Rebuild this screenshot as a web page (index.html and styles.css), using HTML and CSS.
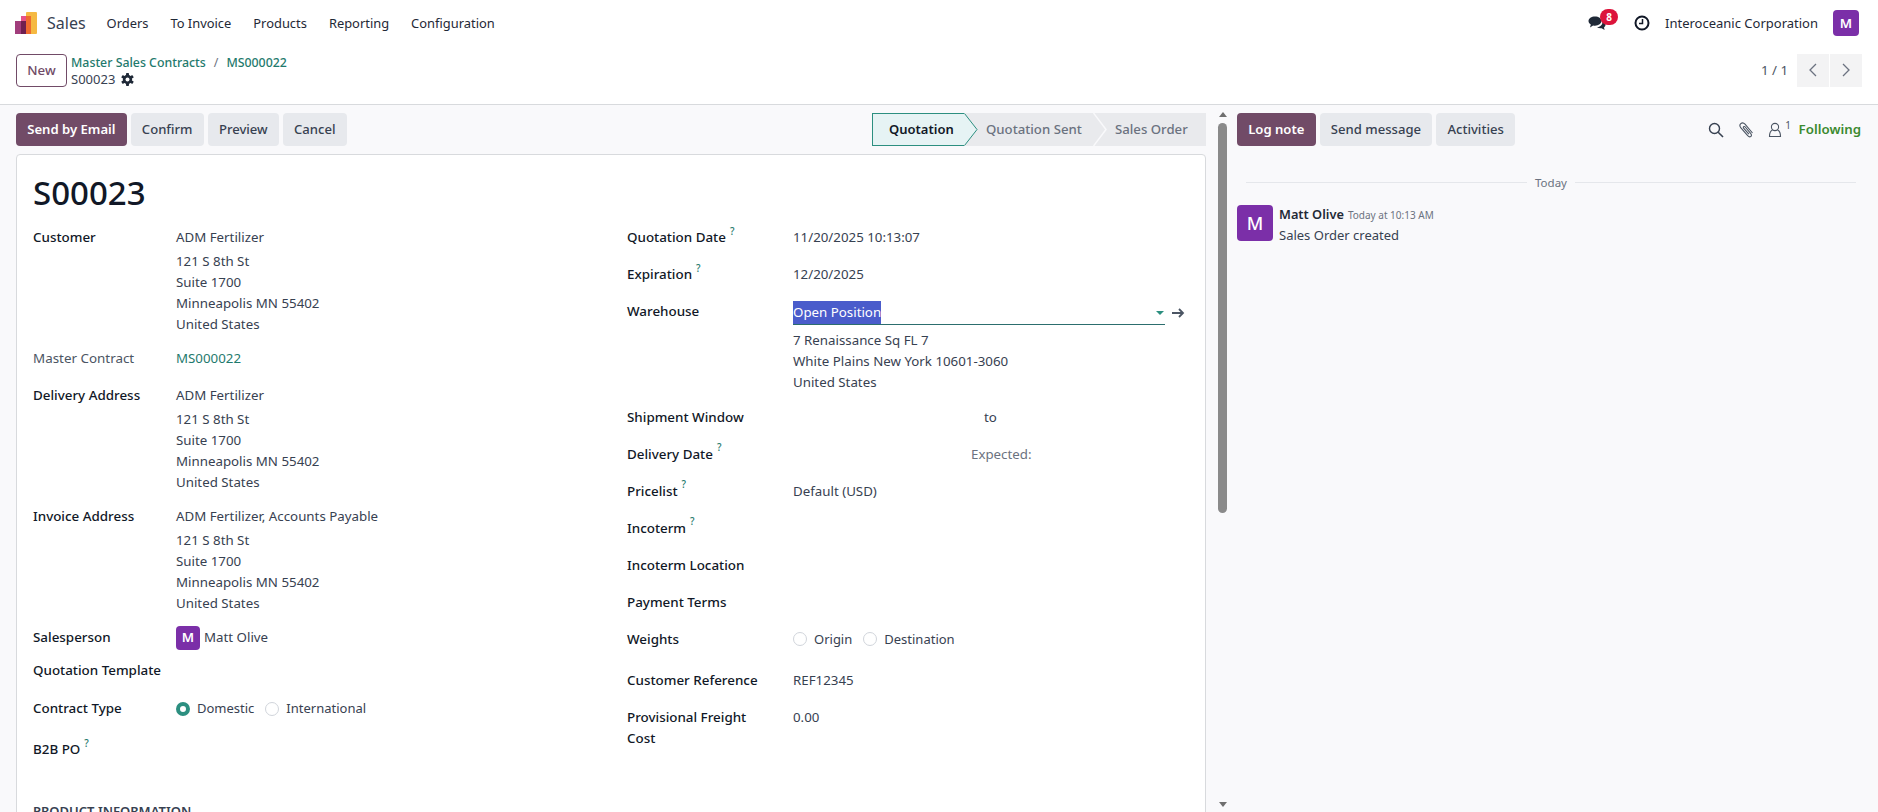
FILE: index.html
```html
<!DOCTYPE html>
<html lang="en">
<head>
<meta charset="utf-8">
<title>S00023 - Sales</title>
<link rel="stylesheet" href="styles.css">
</head>
<body>
<header class="navbar">
  <svg class="logo" width="23" height="23" viewBox="0 0 23 23"><rect x="11" y="0" width="11" height="22" rx="1" fill="#f5b942"/><rect x="6" y="4" width="10" height="18" fill="#ee6a2f"/><rect x="6" y="4" width="5" height="5" fill="#e6518a"/><rect x="0" y="9" width="11" height="13" fill="#a13d7c"/><rect x="6" y="9" width="5" height="13" fill="#6f1f50"/></svg>
  <span class="app-name">Sales</span>
  <nav class="menu"><a>Orders</a><a>To Invoice</a><a>Products</a><a>Reporting</a><a>Configuration</a></nav>
  <div class="systray">
    <span class="chat">
      <svg width="18" height="16" viewBox="0 0 18 16"><path d="M7 1.500c3.600 0 6.500 2 6.500 4.600s-2.900 4.600-6.500 4.600c-.7 0-1.300-.1-1.900-.2L2 12.500l.8-2.900C1.400 8.700.5 7.500.5 6.100.5 3.500 3.400 1.500 7 1.500z" fill="#1f2937"/><path d="M14.500 6.500c1.800.7 3 1.900 3 3.300 0 1-.6 1.900-1.500 2.600l.6 2.600-3-1.700c-2 .2-3.600-.2-4.800-1 3.400-.1 5.900-2.600 5.700-5.800z" fill="#1f2937"/></svg>
      <b class="badge">8</b>
    </span>
    <svg class="clock" width="16" height="16" viewBox="0 0 16 16"><circle cx="8" cy="8" r="6.500" fill="none" stroke="#111827" stroke-width="2"/><path d="M8.500 4v4.500H5" fill="none" stroke="#111827" stroke-width="1.500"/></svg>
    <span class="company">Interoceanic Corporation</span>
    <span class="avatar">M</span>
  </div>
</header>

<section class="control">
  <button class="btn-new">New</button>
  <div class="crumbs">
    <div class="crumb-top"><a>Master Sales Contracts</a><i>/</i><a>MS000022</a></div>
    <div class="crumb-current">S00023
      <svg width="13" height="13" viewBox="0 0 16 16"><g fill="#1f2937"><rect x="6.200" y="0" width="3.600" height="16" rx=".8"/><rect x="6.200" y="0" width="3.600" height="16" rx=".8" transform="rotate(60 8 8)"/><rect x="6.200" y="0" width="3.600" height="16" rx=".8" transform="rotate(120 8 8)"/><circle cx="8" cy="8" r="5.700"/></g><circle cx="8" cy="8" r="2.400" fill="#fff"/></svg>
    </div>
  </div>
  <div class="pager">
    <span class="pager-text">1 / 1</span>
    <span class="pager-btn"><svg width="14" height="16" viewBox="0 0 14 16"><path d="M10 2 4 8l6 6" fill="none" stroke="#6b7280" stroke-width="1.300"/></svg></span>
    <span class="pager-btn"><svg width="14" height="16" viewBox="0 0 14 16"><path d="m4 2 6 6-6 6" fill="none" stroke="#6b7280" stroke-width="1.300"/></svg></span>
  </div>
</section>

<main class="content">
  <div class="form-pane">
    <div class="statusbar">
      <div class="actions">
        <button class="btn primary">Send by Email</button>
        <button class="btn">Confirm</button>
        <button class="btn">Preview</button>
        <button class="btn">Cancel</button>
      </div>
      <div class="stages">
        <span class="stage current">Quotation<svg class="chev" width="14" height="33" viewBox="0 0 14 33"><path d="M0 .5h.5L13 16.500.5 32.500H0z" fill="#e6f3f4"/><path d="M.5 .5 13 16.500.5 32.500" fill="none" stroke="#2c8f80"/></svg></span>
        <span class="stage mid">Quotation Sent<svg class="chev" width="14" height="33" viewBox="0 0 14 33"><path d="M.5 0 13 16.500.5 33" fill="none" stroke="#f9f9fb" stroke-width="1.500"/></svg></span>
        <span class="stage last">Sales Order</span>
      </div>
    </div>
    <article class="sheet">
      <h1 class="title">S00023</h1>
      <div class="columns">
        <div class="col col-left">
          <div class="row row-addr"><label>Customer</label><div class="val addr"><p>ADM Fertilizer</p><p>121 S 8th St</p><p>Suite 1700</p><p>Minneapolis MN 55402</p><p>United States</p></div></div>
          <div class="row"><label class="muted-label">Master Contract</label><div class="val"><a class="link">MS000022</a></div></div>
          <div class="row row-addr"><label>Delivery Address</label><div class="val addr"><p>ADM Fertilizer</p><p>121 S 8th St</p><p>Suite 1700</p><p>Minneapolis MN 55402</p><p>United States</p></div></div>
          <div class="row row-addr"><label>Invoice Address</label><div class="val addr"><p>ADM Fertilizer, Accounts Payable</p><p>121 S 8th St</p><p>Suite 1700</p><p>Minneapolis MN 55402</p><p>United States</p></div></div>
          <div class="row tight"><label>Salesperson</label><div class="val person"><span class="avatar small">M</span>Matt Olive</div></div>
          <div class="row template"><label class="wide">Quotation Template</label></div>
          <div class="row loose"><label>Contract Type</label><div class="val radios"><span class="radio on"></span>Domestic<span class="radio"></span>International</div></div>
          <div class="row"><label>B2B PO<sup>?</sup></label></div>
        </div>
        <div class="col col-right">
          <div class="row"><label>Quotation Date<sup>?</sup></label><div class="val">11/20/2025 10:13:07</div></div>
          <div class="row"><label>Expiration<sup>?</sup></label><div class="val">12/20/2025</div></div>
          <div class="row row-wh"><label>Warehouse</label><div class="val">
            <div class="select-line"><span class="selected">Open Position</span><span class="caret"></span></div>
            <svg class="go" width="14" height="12" viewBox="0 0 14 12"><path d="M1 6h11M8 2l4 4-4 4" fill="none" stroke="#4b5563" stroke-width="1.800"/></svg>
            <div class="wh"><p>7 Renaissance Sq FL 7</p><p>White Plains New York 10601-3060</p><p>United States</p></div>
          </div></div>
          <div class="row"><label>Shipment Window</label><div class="val centered">to</div></div>
          <div class="row"><label>Delivery Date<sup>?</sup></label><div class="val expected">Expected:</div></div>
          <div class="row"><label>Pricelist<sup>?</sup></label><div class="val">Default (USD)</div></div>
          <div class="row"><label>Incoterm<sup>?</sup></label></div>
          <div class="row"><label>Incoterm Location</label></div>
          <div class="row"><label>Payment Terms</label></div>
          <div class="row loose"><label>Weights</label><div class="val radios"><span class="radio"></span>Origin<span class="radio"></span>Destination</div></div>
          <div class="row"><label>Customer Reference</label><div class="val">REF12345</div></div>
          <div class="row"><label class="narrow">Provisional Freight Cost</label><div class="val">0.00</div></div>
        </div>
      </div>
      <h2 class="section">PRODUCT INFORMATION</h2>
    </article>
  </div>
  <div class="scroll"><span class="arrow up"></span><span class="thumb"></span><span class="arrow down"></span></div>
  <aside class="chatter">
    <div class="chatter-bar">
      <button class="btn primary">Log note</button>
      <button class="btn">Send message</button>
      <button class="btn">Activities</button>
      <div class="chatter-tools">
        <svg width="16" height="16" viewBox="0 0 16 16"><circle cx="6.500" cy="6.500" r="5" fill="none" stroke="#374151" stroke-width="1.400"/><path d="m10.200 10.200 4.800 4.800" stroke="#374151" stroke-width="1.600"/></svg>
        <svg width="16" height="16" viewBox="0 0 16 16"><path d="M14.500 11 7 2.200C5.700.8 3.900.7 2.800 1.700S1.600 4.300 2.900 5.800l6.800 7.900c1 1.100 2.400 1.400 3.200.7s.7-2-.3-3.100L7.200 5c-.5-.6-1.200-.7-1.600-.3s-.3 1 .2 1.600l5.100 5.900" fill="none" stroke="#4b5563" stroke-width="1.100"/></svg>
        <span class="followers"><svg width="14" height="16" viewBox="0 0 14 16"><circle cx="7" cy="5" r="3.600" fill="none" stroke="#4b5563" stroke-width="1.100"/><path d="M4.500 8C2 9 1.500 11 1.500 14.500h11C12.500 11 12 9 9.500 8" fill="none" stroke="#4b5563" stroke-width="1.100"/></svg><sup>1</sup></span>
        <span class="following">Following</span>
      </div>
    </div>
    <div class="today"><span>Today</span></div>
    <div class="message">
      <span class="avatar big">M</span>
      <div>
        <div class="msg-head"><b>Matt Olive</b><small>Today at 10:13 AM</small></div>
        <div class="msg-body">Sales Order created</div>
      </div>
    </div>
  </aside>
</main>
</body>
</html>
```
FILE: styles.css
```css
* { box-sizing: border-box; }
html, body { margin: 0; height: 100%; overflow: hidden; }
body { width: 1878px; height: 812px; background: #fff; color: #374151; font: 13.300px/21px "Noto Sans", "Open Sans", sans-serif; display: flex; flex-direction: column; }
p, h1, h2 { margin: 0; }
button { font: inherit; border: 0; cursor: pointer; }

.navbar { height: 46px; flex: none; display: flex; align-items: center; padding: 0 19px 0 15px; }
.logo { margin-right: 9px; margin-top: 0; }
.app-name { font-size: 16px; color: #374151; margin-right: 21px; }
.menu { display: flex; gap: 22px; color: #1f2937; font-size: 12.900px; }
.systray { margin-left: auto; display: flex; align-items: center; }
.chat { position: relative; display: flex; margin-right: 28px; }
.badge { position: absolute; left: 12px; top: -6px; width: 18px; height: 16px; border-radius: 9px; background: #dc143c; color: #fff; font-size: 10px; line-height: 16px; text-align: center; }
.clock { margin-right: 15px; }
.company { color: #1f2937; margin-right: 15px; font-size: 13px; }
.avatar { width: 26px; height: 26px; border-radius: 4px; background: #7b2fa8; color: #fff; font-weight: 600; display: flex; align-items: center; justify-content: center; }
.avatar.small { width: 24px; height: 24px; margin-right: 4px; }
.avatar.big { width: 36px; height: 36px; font-size: 18px; font-weight: 500; flex: none; }

.control { height: 59px; flex: none; display: flex; align-items: center; padding: 0 16px 10px; border-bottom: 1px solid #d8dadd; }
.btn-new { width: 51px; height: 33px; border: 1px solid #714b67; border-radius: 4px; background: #fff; color: #714b67; font-weight: 500; padding: 0; margin-right: 4px; }
.crumbs { line-height: 17px; margin-top: 2px; }
.crumb-top { color: #1f7a6d; font-weight: 500; font-size: 12.350px; }
.crumb-top i { color: #6b7280; font-style: normal; margin: 0 8px; font-weight: 400; }
.crumb-current { color: #374151; display: flex; align-items: center; gap: 6px; font-size: 13px; }
.pager { margin-left: auto; display: flex; align-items: center; color: #4b5563; }
.pager-text { margin-right: 8px; }
.pager-btn { width: 32px; height: 33px; background: #f3f3f4; display: flex; align-items: center; justify-content: center; margin-left: 1px; }

.content { flex: 1; min-height: 0; display: flex; background: #f9f9fb; overflow: hidden; }
.form-pane { width: 1217px; flex: none; padding: 8px 0 0 16px; }
.statusbar { display: flex; justify-content: space-between; width: 1190px; height: 33px; margin-bottom: 8px; }
.actions, .chatter-bar { display: flex; gap: 4px; }
.btn { height: 33px; padding: 0 11.200px; background: #e7e9ed; color: #374151; border-radius: 4px; font-weight: 500; font-size: 13.100px; }
.btn.primary { background: #714b67; color: #fff; font-weight: 600; }
.stages { display: flex; width: 334px; height: 33px; background: #e9eaed; }
.stage { display: flex; align-items: center; color: #6b7280; font-weight: 500; position: relative; font-size: 13.200px; }
.stage.current { width: 92px; padding-left: 16px; background: #e6f3f4; border: 1px solid #2c8f80; border-right: 0; color: #111827; font-weight: 600; white-space: nowrap; font-size: 13px; }
.stage.mid { width: 129px; padding-left: 22px; }
.stage.last { flex: 1; padding-left: 22px; }
.chev { position: absolute; left: 100%; top: -1px; z-index: 1; }
.stage.mid .chev { top: 0; }

.sheet { width: 1190px; height: 800px; background: #fff; border: 1px solid #d8dadd; border-radius: 4px; padding: 15px 16px; }
.title { font-size: 33px; line-height: 46px; font-weight: 500; color: #111827; }
.columns { display: flex; margin-top: 11px; }
.col-left { width: 594px; }
.col-right { flex: 1; }
.row { display: flex; padding-bottom: 16px; }
.row label { width: 143px; flex: none; color: #111827; font-weight: 500; font-size: 13.400px; }
.col-right .row label { width: 166px; }
.row label.wide { width: auto; }
.row label.narrow { padding-right: 30px; }
.row label.muted-label { color: #4b5563; font-weight: 400; }
.row-addr, .row-wh { padding-bottom: 13.500px; }
.addr p:first-child { margin-bottom: 2.500px; }
.row.tight { padding-bottom: 11.500px; }
.row.template { padding-bottom: 17.500px; }
.row.loose { padding-bottom: 20px; }
sup { color: #1f7a6d; font-size: 10px; line-height: 0; margin-left: 4px; position: relative; top: -2px; vertical-align: super; }
.val { position: relative; flex: 1; }
.link { color: #1f7a6d; }
.person { display: flex; align-items: center; height: 21px; }
.radios { display: flex; align-items: center; height: 21px; font-size: 13px; }
.radio { width: 14px; height: 14px; border-radius: 50%; border: 1px solid #d1d5db; background: #fff; margin: 0 7px 0 11px; }
.radio:first-child { margin-left: 0; }
.radio.on { border: 4px solid #2c8f80; }
.select-line { width: 372px; height: 24px; border-bottom: 1px solid #2c6e6e; display: flex; justify-content: space-between; align-items: center; }
.selected { background: #4a5ccb; color: #fff; height: 23px; line-height: 23px; }
.caret { width: 0; height: 0; border: 4px solid transparent; border-top: 4px solid #2c8f80; border-bottom: 0; margin-right: 1px; }
.go { position: absolute; left: 378px; top: 6px; }
.wh { margin-top: 5px; }
.centered { padding-left: 191px; }
.expected { padding-left: 178px; color: #6b7280; }
.section { font-size: 13px; line-height: 21px; font-weight: 600; color: #374151; margin-top: 25px; }

.scroll { width: 11px; flex: none; position: relative; display: flex; flex-direction: column; align-items: center; padding-top: 7px; }
.arrow { width: 0; height: 0; border: 4px solid transparent; }
.arrow.up { border-bottom: 5px solid #6f6f6f; border-top: 0; }
.arrow.down { border-top: 5px solid #6f6f6f; border-bottom: 0; position: absolute; bottom: 5px; }
.thumb { width: 9px; height: 390px; background: #8a8a8a; border-radius: 5px; margin-top: 6px; }

.chatter { flex: 1; padding: 8px 17px 0 9px; }
.chatter-bar { height: 33px; align-items: center; }
.chatter-tools { margin-left: auto; display: flex; align-items: center; gap: 14px; }
.followers { display: flex; }
.followers sup { color: #4b5563; margin-left: 3px; top: 3px; }
.following { color: #3b8a2f; font-weight: 600; font-size: 13.300px; margin-left: -6.500px; }
.today { display: flex; align-items: center; gap: 8px; margin: 26px 5px 0 9px; font-size: 11.500px; color: #6b7280; height: 21px; }
.today::before, .today::after { content: ""; flex: 1; height: 1px; background: #e5e7eb; }
.message { display: flex; gap: 6px; margin-top: 12px; }
.msg-head { line-height: 19px; }
.msg-head b { color: #1f2937; font-weight: 600; margin-right: 4px; font-size: 12.800px; }
.msg-head small { font-size: 10px; color: #6b7280; }
.msg-body { color: #374151; font-size: 13px; }
```
